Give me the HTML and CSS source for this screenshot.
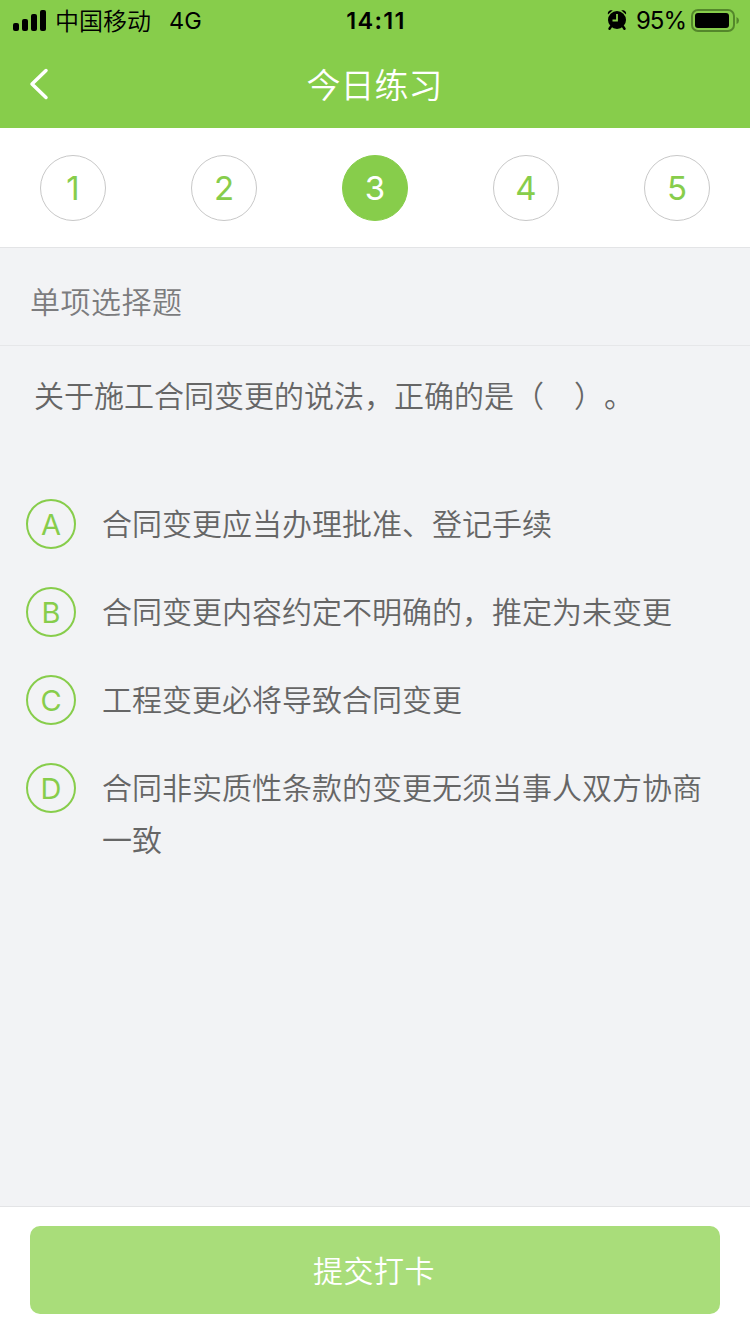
FILE: index.html
```html
<!DOCTYPE html>
<html lang="zh-CN">
<head>
<meta charset="utf-8">
<title>今日练习</title>
<link rel="stylesheet" href="styles.css">
</head>
<body>
<div class="app">
  <header class="header">
    <div class="status">
      <div class="status-left">
        <svg class="signal" width="34" height="22" viewBox="0 0 34 22"><rect x="0" y="13" width="6" height="8" rx="2"/><rect x="9" y="9" width="6" height="12" rx="2"/><rect x="18" y="4" width="6" height="17" rx="2"/><rect x="27" y="0" width="6" height="21" rx="2"/></svg>
        <span class="carrier">中国移动</span>
        <span class="network">4G</span>
      </div>
      <time class="clock">14:11</time>
      <div class="status-right">
        <svg class="alarm" width="20" height="22" viewBox="0 0 20 22"><circle cx="10" cy="11" r="9"/><path d="M1 5.500C.3 2.500 2.500.6 5.800 1.300ZM19 5.500C19.700 2.500 17.500.6 14.200 1.300Z"/><path class="legs" d="M4 17.500 2.500 19.700M16 17.500l1.500 2.200"/><path class="hands" d="M10 5V11.500H5.500"/></svg>
        <span class="percent">95%</span>
        <svg class="battery" width="48" height="24" viewBox="0 0 48 24"><rect class="shell" x="1" y="1" width="42" height="21" rx="6"/><rect x="4" y="4" width="34" height="15" rx="3"/><path class="cap" d="M45.500 8Q48 9 48 11.500T45.500 15Z"/></svg>
      </div>
    </div>
    <div class="nav">
      <svg class="back" width="20" height="32" viewBox="0 0 20 32"><path d="M17 2.500 3 16 17 29.500"/></svg>
      <h1 class="title">今日练习</h1>
    </div>
  </header>
  <nav class="steps">
    <span class="step">1</span>
    <span class="step">2</span>
    <span class="step active">3</span>
    <span class="step">4</span>
    <span class="step">5</span>
  </nav>
  <main class="content">
    <h2 class="kind">单项选择题</h2>
    <p class="question">关于施工合同变更的说法，正确的是（　）。</p>
    <ul class="options">
      <li class="option"><span class="letter">A</span><span class="answer">合同变更应当办理批准、登记手续</span></li>
      <li class="option"><span class="letter">B</span><span class="answer">合同变更内容约定不明确的，推定为未变更</span></li>
      <li class="option"><span class="letter">C</span><span class="answer">工程变更必将导致合同变更</span></li>
      <li class="option"><span class="letter">D</span><span class="answer">合同非实质性条款的变更无须当事人双方协商一致</span></li>
    </ul>
  </main>
  <footer class="footer"><button class="submit">提交打卡</button></footer>
</div>
</body>
</html>
```
FILE: styles.css
```css
* { box-sizing: border-box; }
body, h1, h2, p, ul { margin: 0; padding: 0; }
body { font-family: "Noto Sans CJK SC", sans-serif; font-weight: 350; font-size: 30px; color: #666; text-spacing-trim: space-all; }
.app { display: flex; flex-direction: column; width: 750px; height: 1334px; background: #f2f3f5; }
.header { height: 128px; background: #87cd4b; }
.status { display: grid; grid-template-columns: 1fr auto 1fr; align-items: center; height: 40px; padding: 0 11px 0 13px; color: #000; }
.status-left, .status-right { display: flex; align-items: center; }
.status-right { justify-content: flex-end; }
.carrier { margin-left: 8px; font-size: 24px; line-height: 38px; padding-bottom: 2px; }
.network { margin-left: 18px; font: 380 23.5px/42px Inter, sans-serif; }
.clock { font: 600 23.5px/42px Inter, sans-serif; letter-spacing: 1.3px; }
.percent { margin: 0 5px 0 9px; font: 380 24px/42px Inter, sans-serif; letter-spacing: -1px; }
.alarm { margin-bottom: 2px; }
.alarm .legs { stroke: #000; stroke-width: 2.500; fill: none; stroke-linecap: round; }
.alarm .hands { stroke: #87cd4b; stroke-width: 1.800; fill: none; }
.battery { margin-bottom: 1px; }
.battery .shell { fill: none; stroke: #54872b; stroke-width: 2; }
.battery .cap { fill: #54872b; }
.nav { display: grid; grid-template-columns: 60px 1fr 60px; align-items: center; height: 88px; }
.back { margin-left: 29px; fill: none; stroke: #fff; stroke-width: 3.500; stroke-linecap: round; stroke-linejoin: round; }
.title { padding-right: 1px; font-size: 34px; line-height: 86px; font-weight: 350; text-align: center; color: #fff; }
.steps { display: flex; justify-content: space-between; align-items: center; height: 120px; padding: 0 40px; background: #fff; border-bottom: 1px solid #e3e4e6; }
.step { width: 66px; height: 66px; border: 1px solid #c8c8c8; border-radius: 50%; font: 370 33px/65px Inter, sans-serif; text-align: center; color: #87cd4b; }
.step.active { border-color: #87cd4b; background: #87cd4b; color: #fff; }
.content { flex: 1; }
.kind { height: 98px; padding-left: 30px; border-bottom: 1px solid #e6e7e9; font-size: 30px; line-height: 104px; font-weight: 350; letter-spacing: .5px; color: #7c7c7e; }
.question { padding: 22px 34px 0; line-height: 52px; }
.options { display: flex; flex-direction: column; gap: 35px; padding: 76px 26px 0; list-style: none; }
.option { display: flex; align-items: flex-start; gap: 26px; }
.letter { flex: none; width: 50px; height: 50px; margin-top: 3px; border: 2px solid #87cd4b; border-radius: 50%; font: 380 29px/48px Inter, sans-serif; text-align: center; color: #87cd4b; }
.answer { width: 610px; line-height: 52px; }
.footer { height: 128px; padding: 19px 30px 20px; background: #fff; border-top: 1px solid #e3e4e6; }
.submit { display: block; width: 100%; height: 88px; padding: 0 2px 2px 0; border: 0; border-radius: 10px; background: #a9dd7a; font: 350 30px/86px "Noto Sans CJK SC", sans-serif; letter-spacing: .5px; color: #fff; }
```
